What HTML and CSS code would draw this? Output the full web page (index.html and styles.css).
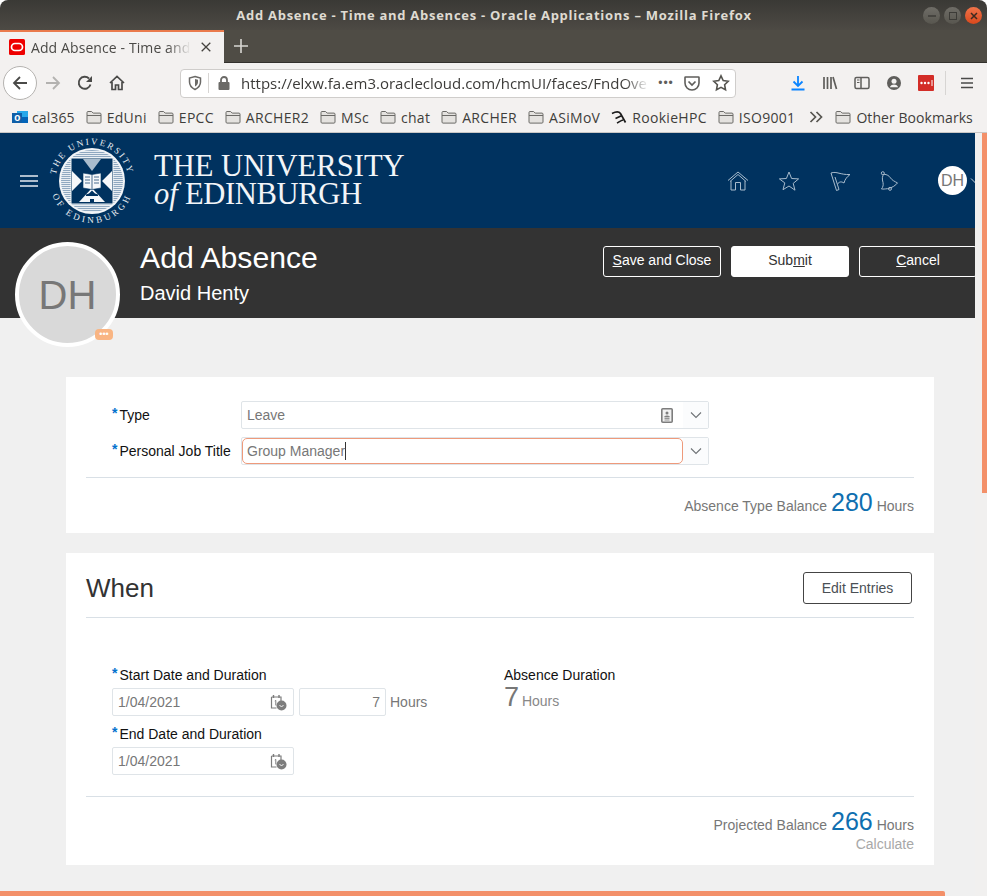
FILE: index.html
```html
<!DOCTYPE html>
<html lang="en">
<head>
<meta charset="utf-8">
<title>Add Absence - Time and Absences</title>
<link rel="stylesheet" href="styles.css">
</head>
<body>
<svg class="defs" width="0" height="0" aria-hidden="true">
  <symbol id="folder" viewBox="0 0 16 16"><path d="M1 3.500c0-.6.4-1 1-1h3.600l1.600 1.600H14c.6 0 1 .4 1 1v8c0 .6-.4 1-1 1H2c-.6 0-1-.4-1-1z" fill="#e4e2df" stroke="#6b6a67"/><path d="M1 6.500h14" stroke="#6b6a67"/></symbol>
  <symbol id="chev" viewBox="0 0 12 8"><path d="M1 1.500l5 5 5-5" fill="none" stroke="#6f7376" stroke-width="1.100"/></symbol>
  <symbol id="calclock" viewBox="0 0 17 17"><path d="M1.500 3h9.500v4M1.500 3v11h5" fill="none" stroke="#7d7d7d" stroke-width="1.200"/><path d="M3.500 1v3M9 1v3" stroke="#7d7d7d" stroke-width="1.400"/><path d="M4.800 7l1-.6v5" fill="none" stroke="#7d7d7d"/><circle cx="11.500" cy="11.500" r="5" fill="#7d7d7d"/><path d="M9.500 11.500l2 1 2-1" fill="none" stroke="#fff" stroke-width=".9"/></symbol>
  <pattern id="hatch" width="2" height="2" patternUnits="userSpaceOnUse"><rect width="2" height="2" fill="#e8edf2"/><rect width="2" height="1" fill="#8fa8c0"/></pattern>
</svg>

<header class="titlebar">
  <span class="title-text">Add Absence - Time and Absences - Oracle Applications – Mozilla Firefox</span>
  <div class="winbtns">
    <span class="winbtn"><svg viewBox="0 0 16 16" width="16" height="16"><path d="M4 8h8" stroke="#3c3b37" stroke-width="1.500"/></svg></span>
    <span class="winbtn"><svg viewBox="0 0 16 16" width="16" height="16"><rect x="4.500" y="4.500" width="7" height="7" fill="none" stroke="#3c3b37"/></svg></span>
    <span class="winbtn winbtn-close"><svg viewBox="0 0 16 16" width="16" height="16"><path d="M5 5l6 6M11 5l-6 6" stroke="#3c2a20" stroke-width="1.500"/></svg></span>
  </div>
</header>

<nav class="tabbar">
  <div class="tab">
    <svg class="favicon" viewBox="0 0 16 16" width="16" height="16"><rect width="16" height="16" rx="1.500" fill="#ee0000"/><rect x="2.500" y="4.500" width="11" height="7" rx="3.500" fill="none" stroke="#fff" stroke-width="1.700"/></svg>
    <span class="tab-title">Add Absence - Time and A</span>
    <svg class="tab-close" viewBox="0 0 10 10" width="10" height="10"><path d="M.7.7l8.600 8.600M9.300.7L.7 9.300" stroke="#45433f" stroke-width="1.300"/></svg>
  </div>
  <svg class="newtab" viewBox="0 0 14 14" width="14" height="14"><path d="M7 0v14M0 7h14" stroke="#d8d6d2" stroke-width="1.600"/></svg>
</nav>

<div class="toolbar">
  <span class="backbtn"><svg viewBox="0 0 16 16" width="16" height="16"><path d="M15 8H2M8 2L2 8l6 6" fill="none" stroke="#4a4a48" stroke-width="1.800"/></svg></span>
  <svg class="tool tool-fwd" viewBox="0 0 16 16" width="16" height="16"><path d="M1 8h13M8 2l6 6-6 6" fill="none" stroke="#b3b2b0" stroke-width="1.800"/></svg>
  <svg class="tool tool-reload" viewBox="0 0 16 16" width="16" height="16"><path d="M13.500 9.500A6 6 0 1 1 12 3.500" fill="none" stroke="#4a4a48" stroke-width="1.900"/><path d="M15 1v6H9z" fill="#4a4a48"/></svg>
  <svg class="tool tool-home" viewBox="0 0 16 16" width="16" height="16"><path d="M1 8l7-6.500L15 8M3 7v7.500h3.500V10h3v4.500H13V7" fill="none" stroke="#4a4a48" stroke-width="1.700"/></svg>
  <div class="urlbar">
    <svg class="url-shield" viewBox="0 0 14 16" width="14" height="16"><path d="M7 1.500l5.500 1.500v4c0 3.500-2.500 6-5.500 7.500C4 13 1.500 10.500 1.500 7V3z" fill="none" stroke="#6b6a67" stroke-width="1.500"/><path d="M7 4l3 .8V7c0 2-1.300 3.500-3 4.500z" fill="#6b6a67"/></svg>
    <span class="url-sep"></span>
    <svg class="url-lock" viewBox="0 0 14 16" width="14" height="16"><path d="M4 7V5a3 3 0 0 1 6 0v2" fill="none" stroke="#6b6a67" stroke-width="1.800"/><rect x="1.500" y="7" width="11" height="8" rx="1" fill="#6b6a67"/></svg>
    <span class="url-text">https://elxw.fa.em3.oraclecloud.com/hcmUI/faces/FndOve</span>
    <span class="url-dots">•••</span>
    <svg class="url-pocket" viewBox="0 0 16 16" width="16" height="16"><path d="M1.500 2h13c.3 0 .5.200.5.500V8a7 7 0 0 1-14 0V2.500c0-.3.200-.5.500-.5z" fill="none" stroke="#5f5e5b" stroke-width="1.600"/><path d="M4.500 6.500L8 10l3.500-3.500" fill="none" stroke="#5f5e5b" stroke-width="1.700"/></svg>
    <svg class="url-star" viewBox="0 0 18 18" width="18" height="18"><path d="M9 1.800l2.200 4.700 5 .7-3.600 3.500.9 5L9 13.300l-4.500 2.400.9-5L1.800 7.200l5-.7z" fill="none" stroke="#55544f" stroke-width="1.600"/></svg>
  </div>
  <div class="tool-right">
    <svg viewBox="0 0 16 16" width="16" height="16"><path d="M8 1v9.500M3.500 6.500L8 11l4.500-4.500M1.500 14.500h13" fill="none" stroke="#0a84ff" stroke-width="1.800"/></svg>
    <svg viewBox="0 0 16 16" width="16" height="16"><path d="M2 2v12M5.500 2v12M9 2v12M11 2l3.500 12" fill="none" stroke="#5f5e5b" stroke-width="1.700"/></svg>
    <svg viewBox="0 0 16 16" width="16" height="16"><rect x="1" y="2.500" width="14" height="11" rx="1.500" fill="none" stroke="#5f5e5b" stroke-width="1.500"/><path d="M7 3v10" stroke="#5f5e5b" stroke-width="1.500"/><path d="M3 5h2.500M3 7.500h2.500" stroke="#5f5e5b"/></svg>
    <svg viewBox="0 0 16 16" width="16" height="16"><circle cx="8" cy="8" r="7" fill="#5f5e5b"/><circle cx="8" cy="6.200" r="2.500" fill="#f3f1f0"/><path d="M3.800 12.200c1-2 2.500-2.700 4.200-2.700s3.200.7 4.200 2.700" fill="#f3f1f0"/></svg>
    <svg viewBox="0 0 16 16" width="16" height="16"><rect width="16" height="16" rx="1" fill="#d32d27"/><circle cx="3.500" cy="8" r="1.200" fill="#fff"/><circle cx="7" cy="8" r="1.200" fill="#fff"/><circle cx="10.500" cy="8" r="1.200" fill="#fff"/><path d="M14 5v6" stroke="#fff"/></svg>
    <span class="tool-sep"></span>
    <svg class="tool-menu" viewBox="0 0 14 12" width="14" height="12"><path d="M1 1.500h12M1 6h12M1 10.500h12" stroke="#4a4a48" stroke-width="1.600"/></svg>
  </div>
</div>

<div class="bookmarks">
  <span class="bm bm-first"><svg class="bm-icon" viewBox="0 0 16 16" width="16" height="16"><rect x="5" y="2" width="11" height="12" fill="#28a8ea"/><rect x="5" y="8" width="11" height="6" fill="#0364b8"/><rect y="4" width="10" height="10" fill="#0f5fa8"/><text class="bm-o" x="2.200" y="12">o</text></svg>cal365</span>
  <span class="bm"><svg class="bm-icon"><use href="#folder"/></svg>EdUni</span>
  <span class="bm"><svg class="bm-icon"><use href="#folder"/></svg>EPCC</span>
  <span class="bm"><svg class="bm-icon"><use href="#folder"/></svg>ARCHER2</span>
  <span class="bm"><svg class="bm-icon"><use href="#folder"/></svg>MSc</span>
  <span class="bm"><svg class="bm-icon"><use href="#folder"/></svg>chat</span>
  <span class="bm"><svg class="bm-icon"><use href="#folder"/></svg>ARCHER</span>
  <span class="bm"><svg class="bm-icon"><use href="#folder"/></svg>ASiMoV</span>
  <span class="bm"><svg class="bm-icon" viewBox="0 0 16 16" width="16" height="16"><path d="M1 4.500C5 2.500 8 2.500 9.500 4.500L14.500 13.500M4.500 9.500L11 6.500M6 14c2-1 4-2.500 6-3" fill="none" stroke="#1b1b1b" stroke-width="1.700"/></svg>RookieHPC</span>
  <span class="bm"><svg class="bm-icon"><use href="#folder"/></svg>ISO9001</span>
  <svg class="bm-more" viewBox="0 0 14 12" width="14" height="12"><path d="M1.500 1l5 5-5 5M7.500 1l5 5-5 5" fill="none" stroke="#55544f" stroke-width="1.700"/></svg>
  <span class="bm bm-last"><svg class="bm-icon"><use href="#folder"/></svg>Other Bookmarks</span>
</div>

<div class="app">
  <main class="app-main">
    <div class="brandbar">
      <svg class="hamburger" viewBox="0 0 18 12" width="18" height="12"><path d="M0 1h18M0 6h18M0 11h18" stroke="#e6ecf2" stroke-width="1.500"/></svg>
      <svg class="seal" viewBox="0 0 90 90" width="90" height="90">
        <defs>
          <path id="arcTop" d="M8.500 45A36.500 36.500 0 0 1 81.500 45"/>
          <path id="arcBot" d="M3 45A42 42 0 0 0 87 45"/>
        </defs>
        <text class="seal-text" text-anchor="middle"><textPath href="#arcTop" startOffset="50%">THE UNIVERSITY</textPath></text>
        <text class="seal-text seal-text-low" text-anchor="middle"><textPath href="#arcBot" startOffset="50%">OF EDINBURGH</textPath></text>
        <circle cx="45" cy="45" r="33" fill="#f2f5f8"/>
        <circle cx="45" cy="45" r="31" fill="url(#hatch)"/>
        <rect x="24" y="22" width="42" height="46" fill="#00325f" stroke="#f2f5f8"/>
        <path d="M25 35l10 10-10 10zM65 35L55 45l10 10z" fill="#f6f8fa"/>
        <path d="M36 23h18l-9 12z" fill="#a9bccd"/>
        <path d="M32 66l13-14 13 14z" fill="#f6f8fa"/>
        <path d="M36 37l9 1.500 9-1.500v15l-9 1.500-9-1.500z" fill="#f6f8fa" stroke="#00325f" stroke-width=".6"/>
        <path d="M45 38.500v15M38 41h5M38 44h5M38 47h5M47 41h5M47 44h5M47 47h5" stroke="#00325f" stroke-width=".7"/>
        <path d="M39 60h12v-1.500l-3-1-3-3-3 3-3 1zM43 63h4v3h-4z" fill="#00325f"/>
      </svg>
      <div class="wordmark">
        <div class="wm-line">THE UNIVERSITY</div>
        <div class="wm-line wm-line-two"><i class="wm-of">of</i> EDINBURGH</div>
      </div>
      <div class="brand-icons">
        <svg viewBox="0 0 22 20" width="22" height="20"><path d="M1 9.500L11 1l10 8.500M3 10.500L11 3.500l8 7" fill="none" stroke="#a9bccd"/><path d="M4 10v9h4.500v-7.500h5V19H18v-9" fill="none" stroke="#a9bccd"/></svg>
        <svg viewBox="0 0 22 20" width="22" height="20"><path d="M11 1l2.600 6.500 7 .4-5.400 4.500 1.800 6.800L11 15l-6 3.700 1.800-6.800L1.400 7.900l7-.4z" fill="none" stroke="#a9bccd"/></svg>
        <svg viewBox="0 0 22 20" width="22" height="20"><path d="M2 2C8 0 11 4 21 3.500 18 6 16 8 15 12 12 10 10 11 8.500 13M2 2L7.500 19.500 10 18.500 6 6" fill="none" stroke="#a9bccd"/></svg>
        <svg viewBox="0 0 22 20" width="22" height="20"><circle cx="2.800" cy="2.200" r="1.500" fill="none" stroke="#a9bccd"/><circle cx="10" cy="17.800" r="1.500" fill="none" stroke="#a9bccd"/><path d="M4 3.200c3 .3 5 1.500 6.500 3.700 1.500 2.300 4 3.500 7 5-2 2.500-5 4.800-10 5.800-2.500.3-4.500.5-6 .3 1.500-2 2-4 1.500-6.500C2 8 2 5 4 3.200z" fill="none" stroke="#a9bccd"/></svg>
        <span class="user-chip">DH</span>
        <svg class="user-chev" viewBox="0 0 12 8" width="12" height="8"><path d="M1 1.500l5 5 5-5" fill="none" stroke="#c7d3de"/></svg>
      </div>
    </div>

    <div class="pagehead">
      <div class="avatar">DH<span class="avatar-badge">•••</span></div>
      <div class="pagehead-text">
        <h1 class="pagetitle">Add Absence</h1>
        <div class="pagesub">David Henty</div>
      </div>
      <div class="pagehead-actions">
        <button class="btn"><u>S</u>ave and Close</button>
        <button class="btn btn-primary">Sub<u>m</u>it</button>
        <button class="btn"><u>C</u>ancel</button>
      </div>
    </div>

    <div class="content">
      <section class="card card-type">
        <div class="form-row">
          <label class="label"><span class="req">*</span>Type</label>
          <div class="combo">
            <span class="combo-value">Leave</span>
            <svg class="idcard" viewBox="0 0 12 15" width="12" height="15"><rect x=".8" y=".8" width="10.400" height="13.400" rx="1" fill="#f1f1f1" stroke="#7d7d7d" stroke-width="1.600"/><circle cx="6" cy="5" r="1.500" fill="#7d7d7d"/><path d="M3.500 9c0-1.500 5-1.500 5 0zM3.500 10.500h5M3.500 12h5" fill="#7d7d7d" stroke="#7d7d7d" stroke-width=".8"/></svg>
            <span class="combo-drop"><svg width="12" height="8"><use href="#chev"/></svg></span>
          </div>
        </div>
        <div class="form-row">
          <label class="label"><span class="req">*</span>Personal Job Title</label>
          <div class="combo">
            <span class="combo-focus"><span class="combo-caret">Group Manager</span></span>
            <span class="combo-drop"><svg width="12" height="8"><use href="#chev"/></svg></span>
          </div>
        </div>
        <div class="balance balance-type">
          Absence Type Balance <span class="balance-num">280</span> Hours
        </div>
      </section>

      <section class="card card-when">
        <div class="when-head">
          <h2 class="when-title">When</h2>
          <button class="btn btn-outline">Edit Entries</button>
        </div>
        <div class="when-grid">
          <div class="when-dates">
            <label class="label label-stack"><span class="req">*</span>Start Date and Duration</label>
            <div class="date-row">
              <div class="datebox">1/04/2021<svg width="17" height="17"><use href="#calclock"/></svg></div>
              <div class="numbox">7</div>
              <span class="unit">Hours</span>
            </div>
            <label class="label label-stack"><span class="req">*</span>End Date and Duration</label>
            <div class="date-row">
              <div class="datebox">1/04/2021<svg width="17" height="17"><use href="#calclock"/></svg></div>
            </div>
          </div>
          <div class="when-duration">
            <div class="label label-stack">Absence Duration</div>
            <div class="duration-value"><span class="duration-num">7</span> Hours</div>
          </div>
        </div>
        <div class="balance balance-proj">
          Projected Balance <span class="balance-num">266</span> Hours
          <div class="calculate">Calculate</div>
        </div>
      </section>
    </div>
    <div class="footstrip"></div>
  </main>
  <div class="scrollbar"><div class="scrollbar-thumb"></div></div>
</div>
</body>
</html>
```
FILE: styles.css
```css
* { box-sizing: border-box; }
html { background: #fff; }
body { margin: 0; width: 987px; height: 896px; overflow: hidden; font-family: "Liberation Sans", Arial, sans-serif; font-size: 14px; }
.defs { position: absolute; }

/* window title */
.titlebar { height: 30px; display: flex; align-items: center; justify-content: center; position: relative; background: linear-gradient(#3a3935, #4d4a44); border-radius: 8px 8px 0 0; }
.title-text { font-family: "Open Sans", sans-serif; font-weight: 700; font-size: 13px; letter-spacing: .73px; color: #dfdbd2; margin-left: 1px; }
.winbtns { position: absolute; right: 5px; top: 7px; display: flex; gap: 4px; }
.winbtn { width: 17px; height: 17px; border-radius: 50%; display: flex; align-items: center; justify-content: center; background: linear-gradient(#6f6d67, #58564f); }
.winbtn-close { background: linear-gradient(#f0744a, #d9481c); }

/* tabs */
.tabbar { height: 33px; background: #4f4c45; display: flex; align-items: center; border-bottom: 1px solid #33312d; }
.tab { width: 224px; height: 33px; background: #f3f1f0; border-top: 2px solid #ea7a4c; display: flex; align-items: center; padding: 0 12px 0 9px; }
.favicon { flex: none; }
.tab-title { font-family: "Open Sans", sans-serif; font-size: 14px; letter-spacing: .1px; color: #4a4946; margin-left: 6px; width: 160px; white-space: nowrap; -webkit-mask-image: linear-gradient(90deg, #000 85%, transparent); mask-image: linear-gradient(90deg, #000 85%, transparent); }
.tab-close { margin-left: 10px; flex: none; }
.newtab { margin-left: 10px; }

/* toolbar */
.toolbar { height: 37px; padding: 3px 0 0 3px; background: #f3f1f0; display: flex; align-items: center; }
.backbtn { width: 34px; height: 34px; border-radius: 50%; background: #fff; border: 1px solid #b5b3b0; display: flex; align-items: center; justify-content: center; flex: none; }
.tool { flex: none; }
.tool-fwd { margin-left: 8px; }
.tool-reload { margin-left: 16px; }
.tool-home { margin-left: 16px; }
.urlbar { margin-left: 55px; width: 556px; height: 29px; background: #fff; border: 1px solid #cfcdcb; border-radius: 4px; display: flex; align-items: center; padding: 0 6px 0 7px; flex: none; }
.url-shield { flex: none; }
.url-sep { width: 1px; height: 20px; background: #d7d5d3; margin: 0 8px 0 6px; flex: none; }
.url-lock { flex: none; }
.url-text { font-family: "Open Sans", sans-serif; font-size: 15px; color: #3c3b39; margin-left: 10px; width: 408px; white-space: nowrap; flex: none; -webkit-mask-image: linear-gradient(90deg, #000 94%, transparent); mask-image: linear-gradient(90deg, #000 94%, transparent); }
.url-dots { font-size: 12px; color: #5f5e5b; margin-left: 8px; width: 18px; text-align: center; letter-spacing: 1px; flex: none; }
.url-pocket { margin-left: 9px; flex: none; }
.url-star { margin-left: 12px; flex: none; }
.tool-right { display: flex; align-items: center; gap: 16px; margin-left: 54px; }
.tool-sep { width: 1px; height: 24px; background: #d7d5d3; margin-left: -5px; }
.tool-menu { margin-left: -2px; }

/* bookmarks */
.bookmarks { height: 33px; padding: 2px 0 0 12px; background: #f3f1f0; border-bottom: 1px solid #c9c7c5; display: flex; align-items: center; gap: 11px; }
.bm { display: flex; align-items: center; gap: 5px; font-family: "Open Sans", sans-serif; font-size: 14px; letter-spacing: .3px; color: #3f3e3b; white-space: nowrap; }
.bm-first { gap: 4px; letter-spacing: .1px; }
.bm-last { letter-spacing: .07px; margin-left: 1px; }
.bm-icon { width: 16px; height: 16px; flex: none; }
.bm-o { font-family: "Liberation Sans", sans-serif; font-size: 10px; font-weight: 700; fill: #fff; }
.bm-more { margin-left: 3px; flex: none; }

/* app */
.app { height: 763px; display: flex; background: #f0f0f0; }
.app-main { width: 975px; flex: none; overflow: hidden; position: relative; }
.scrollbar { flex: 1; background: #f1f0ef; padding-left: 7px; }
.scrollbar-thumb { height: 360px; background: #f39069; }

.brandbar { height: 95px; background: #00325f; display: flex; align-items: center; padding-left: 20px; }
.hamburger { flex: none; }
.seal { margin-left: 9px; flex: none; overflow: visible; }
.seal-text { font-family: "Liberation Serif", serif; font-size: 9px; letter-spacing: 2px; fill: #e8edf2; }
.seal-text-low { letter-spacing: 3px; }
.wordmark { margin-left: 17px; margin-top: -1px; font-family: "Liberation Serif", serif; color: #f2f5f8; font-size: 30.600px; line-height: 28px; }
.wm-line { white-space: nowrap; }
.wm-line-two { letter-spacing: -.4px; }
.wm-of { letter-spacing: 0; }
.brand-icons { margin-left: auto; display: flex; align-items: center; gap: 29px; }
.user-chip { width: 29px; height: 29px; border-radius: 50%; background: #fff; color: #777; font-size: 16px; display: flex; align-items: center; justify-content: center; margin-left: 7px; }
.user-chev { margin-left: -26px; margin-right: -7px; }

.pagehead { height: 90px; background: #333; display: flex; position: relative; padding-left: 140px; }
.avatar { position: absolute; left: 15px; top: 14px; width: 105px; height: 105px; padding-top: 2px; border-radius: 50%; background: #d9d9d9; border: 4px solid #fff; color: #777; font-size: 40px; display: flex; align-items: center; justify-content: center; }
.avatar-badge { position: absolute; right: 3px; bottom: 3px; width: 18px; height: 11px; border-radius: 4px; background: #f9b583; color: #fff; font-size: 9px; letter-spacing: 0; display: flex; align-items: center; justify-content: center; line-height: 1; }
.pagehead-text { padding-top: 13px; color: #fff; }
.pagetitle { margin: 0; font-size: 30.200px; font-weight: 400; line-height: 34px; }
.pagesub { font-size: 20px; line-height: 24px; margin-top: 6px; }
.pagehead-actions { margin-left: auto; display: flex; gap: 10px; padding-top: 18px; margin-right: -2px; }
.btn { width: 118px; height: 31px; padding: 0 0 3px; font: 14px "Liberation Sans", Arial, sans-serif; border: 1px solid #fff; border-radius: 3px; background: transparent; color: #fff; flex: none; }
.btn-primary { background: #fff; color: #333; }
.btn-outline { width: 109px; height: 32px; padding: 0; border-color: #444; color: #4a4f55; }

.content { padding: 59px 41px 0 66px; display: flex; flex-direction: column; gap: 20px; }
.card { background: #fff; padding: 0 20px; }
.card-type { height: 156px; padding-top: 24px; display: flex; flex-direction: column; gap: 8px; }
.form-row { display: flex; align-items: center; height: 28px; padding-left: 26px; }
.label { color: #111; font-size: 14px; }
.form-row .label { width: 129px; flex: none; }
.req { color: #0572ce; font-weight: 700; position: relative; top: -2px; margin-right: 2px; }
.combo { width: 468px; height: 28px; border: 1px solid #dfe4e8; border-radius: 2px; display: flex; align-items: center; color: #777; }
.combo-value { flex: 1; padding-left: 5px; }
.idcard { margin-right: 10px; flex: none; }
.combo-drop { width: 25px; height: 26px; background: #fbfcfd; display: flex; align-items: center; justify-content: center; flex: none; }
.combo-focus { flex: 1; height: 26px; border: 1px solid #ee9a7b; border-radius: 5px; padding-left: 4px; display: flex; align-items: center; }
.combo-caret { border-right: 1px solid #333; line-height: 18px; }
.balance { border-top: 1px solid #d9e0e6; color: #777; text-align: right; }
.balance-type { margin-top: 4px; padding-top: 8px; line-height: 32px; }
.balance-num { font-size: 25px; color: #0f6fb0; }

.card-when { height: 312px; }
.when-head { height: 65px; padding-top: 19px; border-bottom: 1px solid #d9e0e6; display: flex; justify-content: space-between; align-items: flex-start; padding-right: 2px; }
.when-title { margin: 0; font-size: 26px; font-weight: 400; line-height: 32px; color: #333; }
.when-grid { height: 179px; padding: 48px 0 0 26px; display: flex; border-bottom: 1px solid #d9e0e6; }
.when-dates { width: 392px; flex: none; }
.label-stack { display: block; line-height: 18px; }
.date-row { display: flex; align-items: center; gap: 5px; height: 28px; margin: 4px 0 9px; }
.datebox { width: 182px; height: 28px; border: 1px solid #dfe4e8; border-radius: 2px; color: #777; display: flex; align-items: center; justify-content: space-between; padding: 0 6px 0 5px; }
.numbox { width: 87px; height: 28px; border: 1px solid #dfe4e8; border-radius: 2px; color: #777; display: flex; align-items: center; justify-content: flex-end; padding-right: 5px; }
.unit { color: #777; margin-left: -1px; }
.duration-value { color: #888; line-height: 30px; margin-top: -2px; }
.duration-num { font-size: 27px; color: #777; letter-spacing: -1px; }
.balance-proj { border-top: 0; padding-top: 12px; line-height: 24px; }
.balance-proj .balance-num { line-height: 24px; }
.calculate { color: #a8a8a8; line-height: 16px; margin-top: -1px; }

.footstrip { position: absolute; left: 0; bottom: 0; width: 945px; height: 5px; background: #f39069; border-radius: 0 2px 0 0; }
```
